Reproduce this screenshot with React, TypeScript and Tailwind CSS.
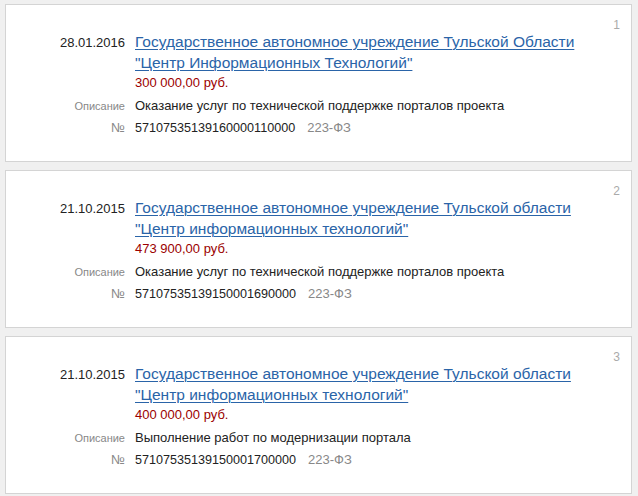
import { FC } from 'react';

type Item = {
  n: number;
  date: string;
  org: string[];
  price: string;
  description: string;
  number: string;
  law: string;
};

const items: Item[] = [
  {
    n: 1,
    date: '28.01.2016',
    org: ['Государственное автономное учреждение Тульской Области', '"Центр Информационных Технологий"'],
    price: '300 000,00 руб.',
    description: 'Оказание услуг по технической поддержке порталов проекта',
    number: '57107535139160000110000',
    law: '223-ФЗ',
  },
  {
    n: 2,
    date: '21.10.2015',
    org: ['Государственное автономное учреждение Тульской области', '"Центр информационных технологий"'],
    price: '473 900,00 руб.',
    description: 'Оказание услуг по технической поддержке порталов проекта',
    number: '57107535139150001690000',
    law: '223-ФЗ',
  },
  {
    n: 3,
    date: '21.10.2015',
    org: ['Государственное автономное учреждение Тульской области', '"Центр информационных технологий"'],
    price: '400 000,00 руб.',
    description: 'Выполнение работ по модернизации портала',
    number: '57107535139150001700000',
    law: '223-ФЗ',
  },
];

const Card: FC<{ item: Item }> = ({ item }) => (
  <div className="relative bg-white border border-[#d4d4d4] pt-[26px] pb-[22px]">
    <span className="absolute right-[11px] top-[11px] text-[12px] text-[#aaaaaa]">{item.n}</span>
    <div className="grid grid-cols-[119px_1fr] gap-x-[10px]">
      <div className="text-right text-[13px] leading-[21px] text-[#222] pt-px">{item.date}</div>
      <div>
        <a href="#" className="block text-[15.5px] leading-[21px] text-[#2a64a8] underline underline-offset-2 decoration-1">
          {item.org[0]}
          <br />
          {item.org[1]}
        </a>
        <div className="text-[13px] leading-[18px] text-[#9b0000] mt-px">{item.price}</div>
      </div>

      <div className="text-right text-[11px] leading-[21px] text-[#888] mt-[3px] pt-px">Описание</div>
      <div className="text-[13px] leading-[21px] text-[#222] mt-[3px]">{item.description}</div>

      <div className="text-right text-[13px] leading-[21px] text-[#888]">№</div>
      <div className="text-[12.6px] leading-[21px] text-[#222]">
        {item.number}
        <span className="ml-[12px] text-[13px] text-[#888]">{item.law}</span>
      </div>
    </div>
  </div>
);

export default function App() {
  return (
    <div className="min-h-[496px] bg-[#f0f0f0] pl-[5px] pt-[4px] pr-[6px] font-['Liberation_Sans',Arial,sans-serif]">
      <div className="flex flex-col gap-[8px]">
        {items.map((item) => (
          <Card item={item} key={item.n} />
        ))}
      </div>
    </div>
  );
}
